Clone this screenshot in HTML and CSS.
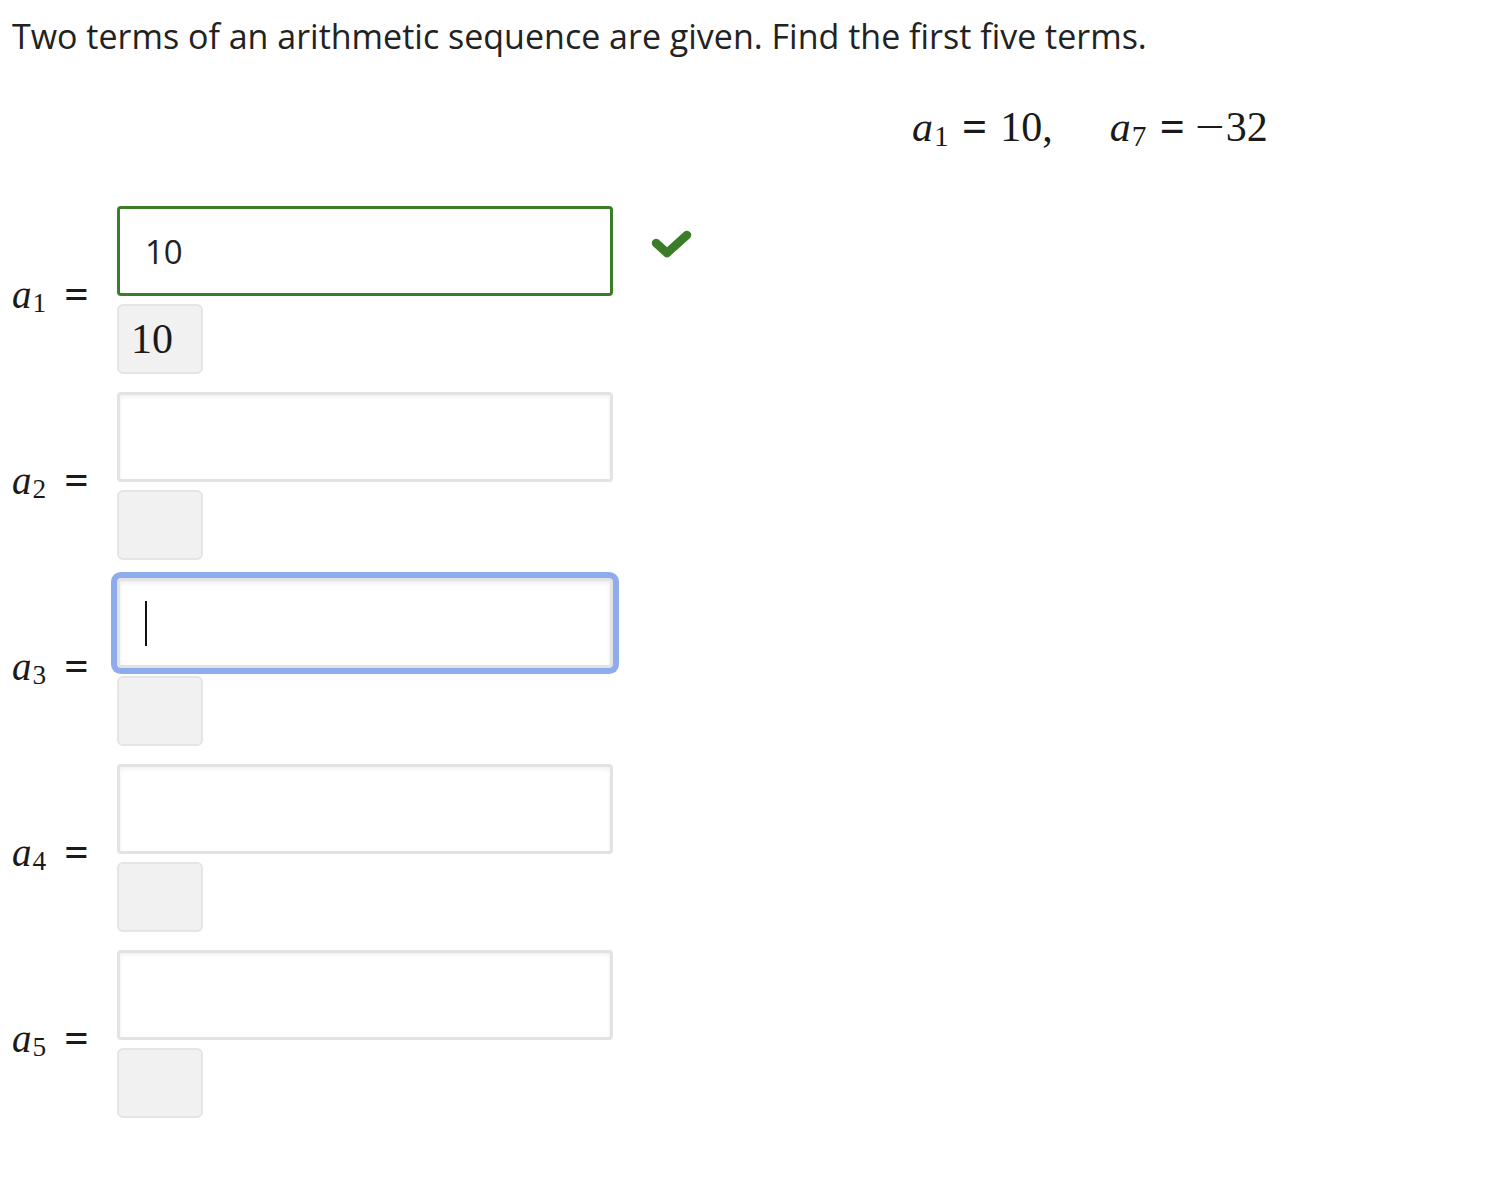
FILE: index.html
```html
<!DOCTYPE html>
<html>
<head>
<meta charset="utf-8">
<link rel="stylesheet" href="styles.css">
</head>
<body>
<div class="page">
  <p class="prompt">Two terms of an arithmetic sequence are given. Find the first five terms.</p>
  <div class="given">
    <span class="math"><i>a</i><sub>1</sub><span class="eq">=</span>10,</span>
    <span class="math second"><i>a</i><sub>7</sub><span class="eq">=</span><span class="minus">−</span>32</span>
  </div>
  <div class="rows">
    <div class="row">
      <div class="label"><i>a</i><sub>1</sub><span class="eq">=</span></div>
      <div class="field">
        <div class="input-line">
          <div class="input correct"><span class="val">10</span></div>
          <svg class="check" width="42" height="32" viewBox="0 0 42 32"><polyline points="5,15 16,25 36,7" fill="none" stroke="#3b7d27" stroke-width="8.5" stroke-linecap="round" stroke-linejoin="round"/></svg>
        </div>
        <div class="preview">10</div>
      </div>
    </div>
    <div class="row">
      <div class="label"><i>a</i><sub>2</sub><span class="eq">=</span></div>
      <div class="field">
        <div class="input-line"><div class="input"></div></div>
        <div class="preview"></div>
      </div>
    </div>
    <div class="row">
      <div class="label"><i>a</i><sub>3</sub><span class="eq">=</span></div>
      <div class="field">
        <div class="input-line"><div class="input focused"><span class="caret"></span></div></div>
        <div class="preview"></div>
      </div>
    </div>
    <div class="row">
      <div class="label"><i>a</i><sub>4</sub><span class="eq">=</span></div>
      <div class="field">
        <div class="input-line"><div class="input"></div></div>
        <div class="preview"></div>
      </div>
    </div>
    <div class="row">
      <div class="label"><i>a</i><sub>5</sub><span class="eq">=</span></div>
      <div class="field">
        <div class="input-line"><div class="input"></div></div>
        <div class="preview"></div>
      </div>
    </div>
  </div>
</div>
</body>
</html>
```
FILE: styles.css
```css
html, body {
  margin: 0;
  padding: 0;
  background: #ffffff;
}
.page {
  padding: 0 0 0 12px;
  color: #1f1f1f;
}
.prompt {
  font-family: "Open Sans", sans-serif;
  font-size: 34px;
  line-height: 44px;
  margin: 14px 0 0 0;
  color: #222222;
}
.given {
  font-family: "Liberation Serif", "Times New Roman", serif;
  font-size: 42px;
  line-height: 50px;
  margin: 44px 0 0 900px;
  display: flex;
  gap: 57px;
  color: #1a1a1a;
}
.math i, .label i {
  font-style: italic;
}
.math sub, .label sub {
  font-size: 70%;
  vertical-align: -0.18em;
  line-height: 0;
  margin-left: 1px;
}
.eq {
  margin: 0 0.3em;
  font-weight: bold;
  font-size: 1.05em;
}
.minus {
  display: inline-block;
  transform: scaleX(1.25);
  margin-right: 4px;
}
.rows {
  display: flex;
  flex-direction: column;
  gap: 18px;
  margin-top: 54px;
}
.row {
  display: flex;
  align-items: center;
}
.label {
  width: 105px;
  font-family: "Liberation Serif", "Times New Roman", serif;
  font-size: 39px;
  color: #1a1a1a;
  line-height: 40px;
  padding-top: 8px;
}
.label .eq {
  margin: 0 0 0 0.42em;
  font-size: 1.1em;
}
.field {
  display: flex;
  flex-direction: column;
  gap: 8px;
}
.input-line {
  display: flex;
  align-items: flex-start;
}
.input {
  box-sizing: border-box;
  width: 496px;
  height: 90px;
  border: 3px solid #e3e3e3;
  border-radius: 4px;
  background: #ffffff;
  box-shadow: inset 0 2px 4px rgba(0, 0, 0, 0.06);
  display: flex;
  align-items: center;
  padding-left: 25px;
}
.input.correct {
  border-color: #3b7d27;
  box-shadow: none;
}
.input.focused {
  box-shadow: 0 0 0 6px #8eabeb, inset 0 2px 4px rgba(0, 0, 0, 0.08);
}
.val {
  font-family: "Open Sans", sans-serif;
  font-size: 33px;
  color: #222222;
}
.caret {
  display: block;
  width: 2px;
  height: 45px;
  background: #111111;
}
.check {
  margin: 22px 0 0 38px;
}
.preview {
  box-sizing: border-box;
  width: 86px;
  height: 70px;
  background: #f1f1f1;
  border: 2px solid #e5e5e5;
  border-radius: 6px;
  font-family: "Liberation Serif", "Times New Roman", serif;
  font-size: 42px;
  color: #1a1a1a;
  display: flex;
  align-items: center;
  padding-left: 12px;
}
```
